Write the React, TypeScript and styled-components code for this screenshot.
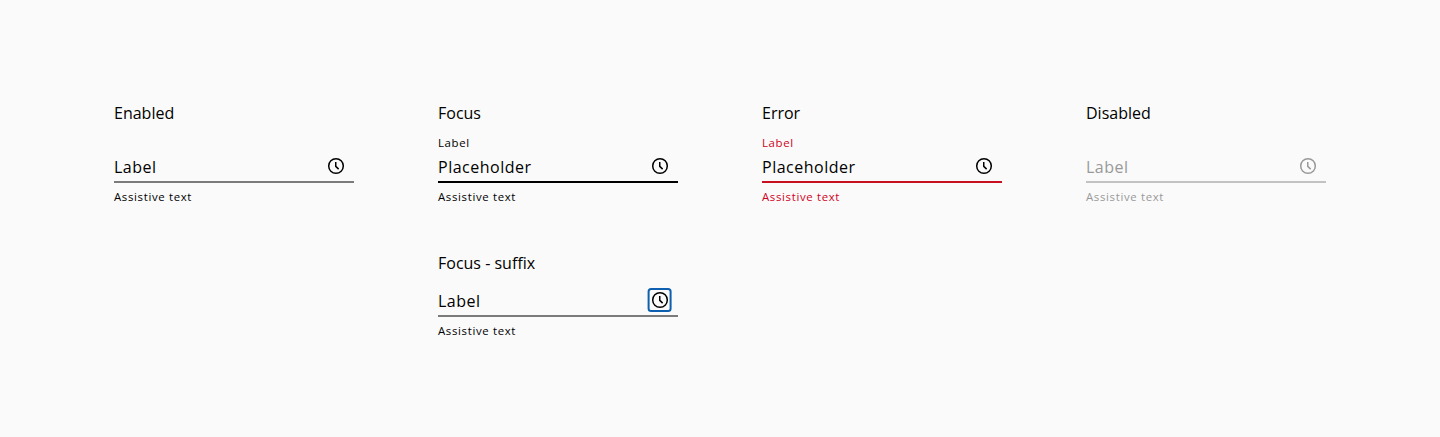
import React from "react";
import styled, { createGlobalStyle } from "styled-components";

const GlobalStyle = createGlobalStyle`
  body { margin: 0; background: #fafafa; }
  * { box-sizing: border-box; }
`;

const Page = styled.main`
  display: grid;
  grid-template-columns: repeat(4, 240px);
  column-gap: 84px;
  grid-template-rows: 150px 150px;
  height: 437px;
  padding: 101px 0 0 114px;
  background: #fafafa;
  color: #000;
  font-family: "Open Sans", sans-serif;
`;

const Cell = styled.section<{ $column: number }>`
  grid-column: ${(p) => p.$column};
`;

const Title = styled.h2`
  margin: 0;
  font-size: 16px;
  font-weight: 400;
  line-height: 24px;
`;

const Field = styled.div<{ $ink: string; $gap: number }>`
  display: flex;
  flex-direction: column;
  padding-top: ${(p) => p.$gap}px;
  color: ${(p) => p.$ink};
`;

const Small = styled.span<{ $color?: string }>`
  height: 16px;
  font-size: 11.4px;
  line-height: 16px;
  letter-spacing: 0.66px;
  color: ${(p) => p.$color ?? "inherit"};
`;

const Control = styled.div<{ $line: string }>`
  display: flex;
  align-items: center;
  justify-content: space-between;
  height: 32px;
  margin-bottom: 6px;
  padding-right: 5px;
  border-bottom: 2px solid ${(p) => p.$line};
`;

const Value = styled.span`
  margin-top: 2px;
  font-size: 16px;
  line-height: 24px;
  letter-spacing: 0.5px;
`;

const ClockSvg = styled.svg`
  display: block;
  flex: none;
`;

const Clock = ({ focused }: { focused?: boolean }) => (
  <ClockSvg width="26" height="26" viewBox="0 0 26 26" fill="none" stroke="currentColor" strokeWidth="1.5">
    {focused && <rect x="1.6" y="2" width="22" height="22" rx="2.5" stroke="#0f5fb0" strokeWidth="2" />}
    <circle cx="13" cy="13" r="7.3" />
    <path d="M12.75 9V13.4l2.9 2.7" />
  </ClockSvg>
);

type Item = {
  title: string;
  column: number;
  value: string;
  label?: string;
  accent?: string;
  ink?: string;
  line: string;
  suffix?: boolean;
};

const items: Item[] = [
  { title: "Enabled", column: 1, value: "Label", line: "#7b7b7b" },
  { title: "Focus", column: 2, value: "Placeholder", label: "Label", line: "#000" },
  { title: "Error", column: 3, value: "Placeholder", label: "Label", accent: "#d0011b", line: "#c81020" },
  { title: "Disabled", column: 4, value: "Label", ink: "#999", line: "#c2c2c2" },
  { title: "Focus - suffix", column: 2, value: "Label", line: "#7b7b7b", suffix: true },
];

export default function App() {
  return (
    <>
      <GlobalStyle />
      <Page>
        {items.map((item) => (
          <Cell key={item.title} $column={item.column}>
            <Title>{item.title}</Title>
            <Field $ink={item.ink ?? "#000"} $gap={item.label || item.suffix ? 10 : 26}>
              {item.label && <Small $color={item.accent}>{item.label}</Small>}
              <Control $line={item.line}>
                <Value>{item.value}</Value>
                <Clock focused={item.suffix} />
              </Control>
              <Small $color={item.accent}>Assistive text</Small>
            </Field>
          </Cell>
        ))}
      </Page>
    </>
  );
}
